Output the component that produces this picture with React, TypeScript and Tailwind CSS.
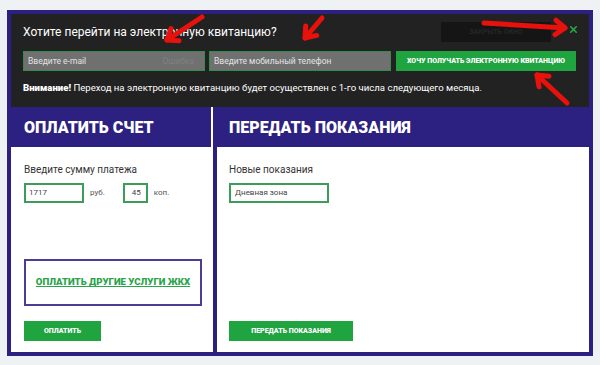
import { X } from 'lucide-react';

function Arrow({ x1, y1, x2, y2 }: { x1: number; y1: number; x2: number; y2: number }) {
  const a = Math.atan2(y2 - y1, x2 - x1);
  const l = 12;
  const p1 = [x2 - l * Math.cos(a - 0.65), y2 - l * Math.sin(a - 0.65)];
  const p2 = [x2 - l * Math.cos(a + 0.65), y2 - l * Math.sin(a + 0.65)];
  return (
    <g stroke="#e8120c" strokeWidth={5} strokeLinecap="round" fill="none">
      <line x1={x1} y1={y1} x2={x2} y2={y2} />
      <polyline points={`${p1[0]},${p1[1]} ${x2},${y2} ${p2[0]},${p2[1]}`} strokeLinejoin="round" />
    </g>
  );
}

export default function App() {
  return (
    <div className="relative w-[600px] h-[365px] bg-[#eef2f5] pt-[10px] px-[7px] font-['Roboto',sans-serif] overflow-hidden">
      <div className="w-[586px] h-[346px] border-4 border-[#2c2181] bg-[#2c2181] flex flex-col">
        {/* e-receipt banner */}
        <div className="relative h-[93px] bg-[#222222] px-[12px] pt-[9px]">
          <h2 className="text-[12px] leading-[18px] text-white">Хотите перейти на электронную квитанцию?</h2>
          <div className="absolute left-[430px] top-[8px] w-[110px] h-[20px] bg-[#151515] flex items-center justify-center text-[7px] font-bold text-[#262626]">
            ЗАКРЫТЬ ОКНО
          </div>
          <X className="absolute right-[10px] top-[10px] w-[11px] h-[11px] text-[#2aa746]" strokeWidth={3.5} />
          <div className="flex gap-[4px] mt-[10px]">
            <div className="relative w-[182px] h-[20px] bg-[#707070] border border-[#2f8f4a] flex items-center px-[4px] text-[8.5px] text-[#e3e3e3]">
              Введите e-mail
              <span className="absolute right-[10px] text-[#808080]">Ошибка</span>
            </div>
            <div className="w-[182px] h-[20px] bg-[#707070] border border-[#2f8f4a] flex items-center px-[4px] text-[8.5px] text-[#e3e3e3]">
              Введите мобильный телефон
            </div>
            <button className="ml-[1px] w-[180px] h-[20px] bg-[#1fa43f] text-white text-[7px] font-black uppercase">
              Хочу получать электронную квитанцию
            </button>
          </div>
          <p className="mt-[10px] text-[9.6px] text-white">
            <b className="font-black">Внимание!</b> Переход на электронную квитанцию будет осуществлен с 1-го числа следующего месяца.
          </p>
        </div>

        <div className="flex flex-1 gap-[4px]">
          {/* pay */}
          <div className="w-[202px] flex flex-col">
            <div className="h-[40px] bg-[#2c2181] border-r-2 border-white flex items-center px-[13px] pt-[2px]">
              <h3 className="text-[16px] font-black text-white">ОПЛАТИТЬ СЧЕТ</h3>
            </div>
            <div className="flex-1 bg-white pl-[13px] pr-[12px] pt-[15px] pb-[11px] flex flex-col">
              <div className="text-[10px] text-[#333]">Введите сумму платежа</div>
              <div className="flex items-center mt-[6px] text-[8px] text-[#555]">
                <div className="w-[60px] h-[20px] border-2 border-[#3c9c58] flex items-center px-[3px] text-[#444]">1717</div>
                <span className="ml-[6px]">руб.</span>
                <div className="ml-[18px] w-[25px] h-[20px] border-2 border-[#3c9c58] flex items-center px-[7px] text-[#444]">45</div>
                <span className="ml-[6px]">коп.</span>
              </div>
              <div className="mt-[56px] w-[178px] h-[47px] border-2 border-[#4a3e93] flex items-center justify-center">
                <a className="text-[9.6px] font-black text-[#2aa34a] underline">ОПЛАТИТЬ ДРУГИЕ УСЛУГИ ЖКХ</a>
              </div>
              <button className="mt-auto w-[77px] h-[20px] bg-[#1fa43f] text-white text-[7px] font-black">ОПЛАТИТЬ</button>
            </div>
          </div>

          {/* meters */}
          <div className="flex-1 flex flex-col">
            <div className="h-[40px] bg-[#2c2181] flex items-center px-[12px] pt-[2px]">
              <h3 className="text-[16px] font-black text-white">ПЕРЕДАТЬ ПОКАЗАНИЯ</h3>
            </div>
            <div className="flex-1 bg-white px-[12px] pt-[15px] pb-[11px] flex flex-col">
              <div className="text-[10px] text-[#333]">Новые показания</div>
              <div className="mt-[6px] w-[100px] h-[20px] border-2 border-[#3c9c58] flex items-center px-[4px] text-[8px] text-[#444]">Дневная зона</div>
              <button className="mt-auto w-[124px] h-[20px] bg-[#1fa43f] text-white text-[7px] font-black">ПЕРЕДАТЬ ПОКАЗАНИЯ</button>
            </div>
          </div>
        </div>
      </div>

      {/* annotation arrows */}
      <svg className="absolute left-0 top-0 pointer-events-none" width={600} height={365}>
        <Arrow x1={202} y1={17} x2={167} y2={40} />
        <Arrow x1={322} y1={18} x2={305} y2={38} />
        <Arrow x1={484} y1={23} x2={565} y2={28} />
        <Arrow x1={567} y1={103} x2={537} y2={75} />
      </svg>
    </div>
  );
}
